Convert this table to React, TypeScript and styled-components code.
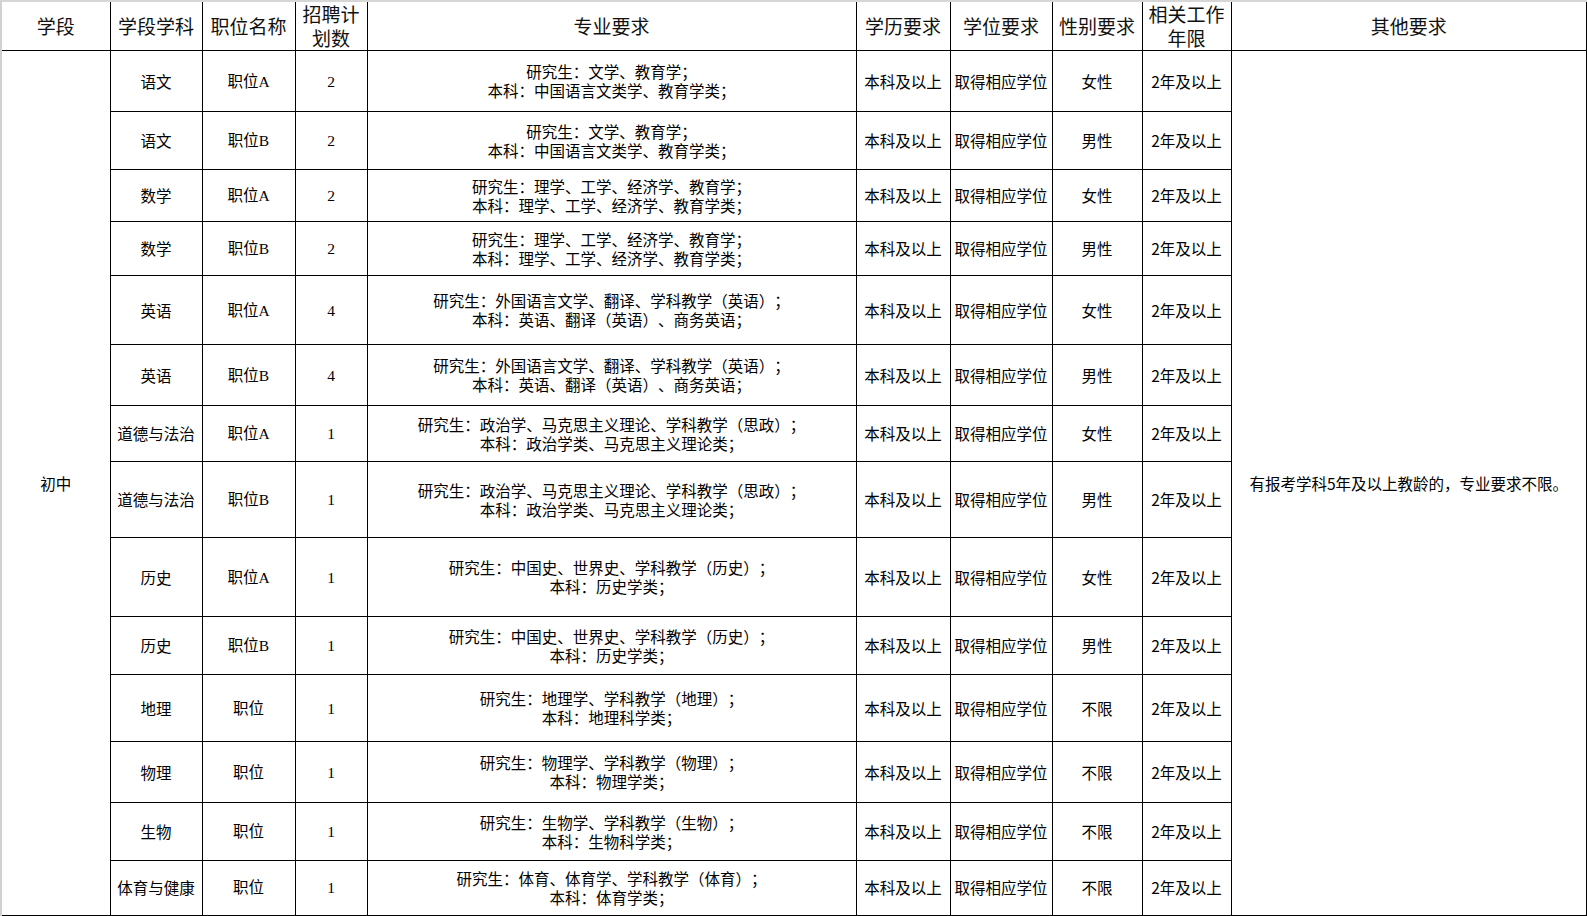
import React from 'react'
import styled, { createGlobalStyle } from 'styled-components'

type Post = {
  subject: string
  post: string
  count: number
  major: [string, string]
  gender: string
  height: number
}

const columns = [108, 92, 93, 72, 489, 94, 102, 90, 89, 356]

const posts: Post[] = [
  { subject: '语文', post: '职位A', count: 2, major: ['研究生：文学、教育学；', '本科：中国语言文类学、教育学类；'], gender: '女性', height: 61 },
  { subject: '语文', post: '职位B', count: 2, major: ['研究生：文学、教育学；', '本科：中国语言文类学、教育学类；'], gender: '男性', height: 58 },
  { subject: '数学', post: '职位A', count: 2, major: ['研究生：理学、工学、经济学、教育学；', '本科：理学、工学、经济学、教育学类；'], gender: '女性', height: 52 },
  { subject: '数学', post: '职位B', count: 2, major: ['研究生：理学、工学、经济学、教育学；', '本科：理学、工学、经济学、教育学类；'], gender: '男性', height: 54 },
  { subject: '英语', post: '职位A', count: 4, major: ['研究生：外国语言文学、翻译、学科教学（英语）；', '本科：英语、翻译（英语）、商务英语；'], gender: '女性', height: 69 },
  { subject: '英语', post: '职位B', count: 4, major: ['研究生：外国语言文学、翻译、学科教学（英语）；', '本科：英语、翻译（英语）、商务英语；'], gender: '男性', height: 61 },
  { subject: '道德与法治', post: '职位A', count: 1, major: ['研究生：政治学、马克思主义理论、学科教学（思政）；', '本科：政治学类、马克思主义理论类；'], gender: '女性', height: 56 },
  { subject: '道德与法治', post: '职位B', count: 1, major: ['研究生：政治学、马克思主义理论、学科教学（思政）；', '本科：政治学类、马克思主义理论类；'], gender: '男性', height: 76 },
  { subject: '历史', post: '职位A', count: 1, major: ['研究生：中国史、世界史、学科教学（历史）；', '本科：历史学类；'], gender: '女性', height: 79 },
  { subject: '历史', post: '职位B', count: 1, major: ['研究生：中国史、世界史、学科教学（历史）；', '本科：历史学类；'], gender: '男性', height: 58 },
  { subject: '地理', post: '职位', count: 1, major: ['研究生：地理学、学科教学（地理）；', '本科：地理科学类；'], gender: '不限', height: 67 },
  { subject: '物理', post: '职位', count: 1, major: ['研究生：物理学、学科教学（物理）；', '本科：物理学类；'], gender: '不限', height: 61 },
  { subject: '生物', post: '职位', count: 1, major: ['研究生：生物学、学科教学（生物）；', '本科：生物科学类；'], gender: '不限', height: 58 },
  { subject: '体育与健康', post: '职位', count: 1, major: ['研究生：体育、体育学、学科教学（体育）；', '本科：体育学类；'], gender: '不限', height: 55 },
]

const App = () => {
  return (
    <>
      <GlobalStyle />
      <Sheet>
        <Table>
          <colgroup>
            {columns.map((w, i) => (
              <Col key={i} $w={w} />
            ))}
          </colgroup>
          <thead>
            <HeadRow>
              <HeadCell>学段</HeadCell>
              <HeadCell>学段学科</HeadCell>
              <HeadCell>职位名称</HeadCell>
              <HeadCell>招聘计<br />划数</HeadCell>
              <HeadCell>专业要求</HeadCell>
              <HeadCell>学历要求</HeadCell>
              <HeadCell>学位要求</HeadCell>
              <HeadCell>性别要求</HeadCell>
              <HeadCell>相关工作<br />年限</HeadCell>
              <HeadCell $last>其他要求</HeadCell>
            </HeadRow>
          </thead>
          <tbody>
            {posts.map((p, i) => (
              <Row key={i} $h={p.height}>
                {i === 0 && (
                  <Cell $first rowSpan={posts.length}>
                    初中
                  </Cell>
                )}
                <Cell>{p.subject}</Cell>
                <Cell $serif>{p.post}</Cell>
                <Cell $serif>{p.count}</Cell>
                <Cell>
                  <MajorLine>{p.major[0]}</MajorLine>
                  <MajorLine>{p.major[1]}</MajorLine>
                </Cell>
                <Cell>本科及以上</Cell>
                <Cell>取得相应学位</Cell>
                <Cell>{p.gender}</Cell>
                <Cell>2年及以上</Cell>
                {i === 0 && (
                  <Cell $last rowSpan={posts.length}>
                    有报考学科5年及以上教龄的，专业要求不限。
                  </Cell>
                )}
              </Row>
            ))}
          </tbody>
        </Table>
      </Sheet>
    </>
  )
}

const GlobalStyle = createGlobalStyle`
  html, body {
    margin: 0;
    padding: 0;
    background: #fff;
  }
  body {
    font-family: 'Noto Sans CJK SC', 'Liberation Sans', sans-serif;
    color: #000;
    text-spacing-trim: space-all;
  }
`

const Sheet = styled.div`
  width: 1587px;
  height: 916px;
  box-sizing: border-box;
  border-top: 2px solid #d6d6d6;
  border-left: 2px solid #d0d0d0;
  overflow: hidden;
`

const Table = styled.table`
  width: 1585px;
  table-layout: fixed;
  border-collapse: collapse;
  border-spacing: 0;
`

const Col = styled.col<{ $w: number }>`
  width: ${(p) => p.$w}px;
`

const HeadRow = styled.tr`
  height: 48px;
`

const HeadCell = styled.th<{ $last?: boolean }>`
  padding: 0;
  border-left: 1px solid #000;
  border-right: ${(p) => (p.$last ? '2px' : '1px')} solid #000;
  border-bottom: 1px solid #000;
  border-top: none;
  &:first-child {
    border-left: none;
  }
  font-family: 'Noto Sans CJK SC', sans-serif;
  font-weight: 400;
  font-size: 19px;
  line-height: 24px;
  color: #111;
  text-align: center;
  vertical-align: middle;
  white-space: nowrap;
  text-spacing-trim: space-all;
`

const Row = styled.tr<{ $h: number }>`
  height: ${(p) => p.$h}px;
  &:last-child td {
    border-bottom: 2px solid #000;
  }
`

const Cell = styled.td<{ $first?: boolean; $last?: boolean; $serif?: boolean }>`
  padding: 0;
  border: 1px solid #000;
  border-left: ${(p) => (p.$first ? 'none' : '1px solid #000')};
  border-right: ${(p) => (p.$last ? '2px' : '1px')} solid #000;
  font-family: ${(p) =>
    p.$serif
      ? "'Liberation Serif', 'Noto Sans CJK SC', serif"
      : "'Noto Sans CJK SC', 'Liberation Sans', sans-serif"};
  font-size: 15.5px;
  line-height: 19px;
  color: #000;
  text-align: center;
  vertical-align: middle;
  white-space: nowrap;
  overflow: hidden;
  text-spacing-trim: space-all;
`

const MajorLine = styled.div`
  text-align: center;
`

export default App
